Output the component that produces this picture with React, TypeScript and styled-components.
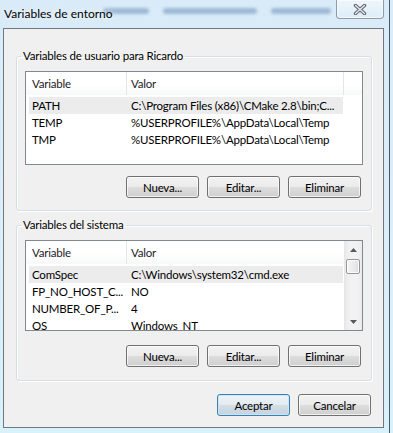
import React from "react";
import styled, { createGlobalStyle } from "styled-components";

const GlobalStyle = createGlobalStyle`
  html, body {
    margin: 0;
    padding: 0;
  }
  body {
    width: 393px;
    height: 433px;
    overflow: hidden;
    background: linear-gradient(180deg, #d9ebf8 0%, #dcedf9 45%, #d8f1fb 100%);
    font-family: "Lato", "Noto Sans", sans-serif;
    font-size: 11.5px;
    letter-spacing: -0.2px;
    color: #000;
  }
`;

const Frame = styled.div`
  position: relative;
  width: 390px;
  height: 433px;
  box-sizing: border-box;
  border-right: 1px solid rgba(40, 52, 64, 0.8);
  display: flex;
  flex-direction: column;
`;

// blurred tabs of the parent window showing through the glass
const Ghosts = styled.div`
  position: absolute;
  top: 8px;
  left: 103px;
  display: flex;
  gap: 14px;
  filter: blur(1.8px);
  pointer-events: none;
`;

const GhostBlob = styled.div<{ $w: number }>`
  width: ${(p) => p.$w}px;
  height: 6px;
  border-radius: 3px;
  background: rgba(70, 110, 160, 0.4);
`;

const TitleBar = styled.div`
  position: relative;
  height: 28px;
  display: flex;
  align-items: flex-start;
  justify-content: space-between;
  padding-left: 4px;
  padding-right: 5px;
  flex-shrink: 0;
`;

const Title = styled.div`
  line-height: 27px;
  font-size: 12px;
  letter-spacing: normal;
  color: #000;
  text-shadow: 0 0 6px rgba(255, 255, 255, 0.9);
`;

const CloseButton = styled.button`
  width: 48px;
  height: 19px;
  box-sizing: border-box;
  padding: 0;
  border: 1px solid rgba(80, 96, 112, 0.6);
  border-top: none;
  border-radius: 0 0 4px 4px;
  background: linear-gradient(180deg, rgba(255, 255, 255, 0.55), rgba(230, 240, 248, 0.35));
  box-shadow: inset 0 0 0 1px rgba(255, 255, 255, 0.6);
  display: flex;
  align-items: center;
  justify-content: center;
`;

const Client = styled.div`
  margin-left: 3px;
  width: 381px;
  height: 400px;
  box-sizing: border-box;
  border: 1px solid #70797f;
  background: #f0f0f0;
  padding: 19px 11px 0 12px;
  display: flex;
  flex-direction: column;
`;

const GroupBox = styled.fieldset<{ $top: number; $bottom: number }>`
  margin: ${(p) => p.$top}px 0 0 0;
  padding: 0 0 ${(p) => p.$bottom}px 0;
  border: 1px solid #d5dfe5;
  border-radius: 3px;
  min-width: 0;
  box-shadow: inset 1px 1px 0 #fff, 1px 1px 0 #fff;
`;

const Legend = styled.legend`
  margin-left: 4px;
  padding: 0 2px;
  line-height: 16px;
`;

const GroupBody = styled.div`
  padding: 0 8px;
`;

const ListView = styled.div<{ $height: number }>`
  margin-top: 7px;
  height: ${(p) => p.$height}px;
  box-sizing: border-box;
  border: 1px solid #828790;
  background: #fff;
  display: flex;
  overflow: hidden;
`;

const ListMain = styled.div`
  flex: 1;
  min-width: 0;
  display: flex;
  flex-direction: column;
`;

const HeaderRow = styled.div`
  display: flex;
  height: 23px;
  flex-shrink: 0;
  background: linear-gradient(180deg, #ffffff 0%, #ffffff 55%, #f7f8f9 100%);
`;

const HeaderCell = styled.div<{ $w?: number; $pad: number }>`
  ${(p) => (p.$w ? `width: ${p.$w}px;` : "flex: 1;")}
  box-sizing: border-box;
  padding-left: ${(p) => p.$pad}px;
  border-right: 1px solid #e5e5e5;
  line-height: 23px;
  color: #1e2328;
  white-space: nowrap;
  overflow: hidden;
  &:last-child {
    border-right: none;
  }
`;

const Rows = styled.div`
  padding: 2px 0 0 3px;
`;

const Row = styled.div<{ $selected?: boolean }>`
  display: flex;
  width: 314px;
  height: 17px;
  line-height: 17px;
  background: ${(p) => (p.$selected ? "#ececec" : "transparent")};
  white-space: nowrap;
`;

const Cell = styled.div<{ $w?: number; $pad: number }>`
  ${(p) => (p.$w ? `width: ${p.$w}px; flex-shrink: 0;` : "flex: 1; min-width: 0;")}
  box-sizing: border-box;
  padding-left: ${(p) => p.$pad}px;
  overflow: hidden;
`;

const ScrollBar = styled.div`
  width: 18px;
  flex-shrink: 0;
  display: flex;
  flex-direction: column;
  box-sizing: border-box;
  border-left: 1px solid #e6e6e6;
  background: linear-gradient(90deg, #e9e9e9 0%, #f2f2f2 30%, #f2f2f2 70%, #ebebeb 100%);
`;

const ArrowBox = styled.div`
  height: 17px;
  display: flex;
  align-items: center;
  justify-content: center;
`;

const Thumb = styled.div`
  margin: 1px 0 0 1px;
  width: 14px;
  height: 15px;
  box-sizing: border-box;
  border: 1px solid #979797;
  border-radius: 2px;
  background: linear-gradient(90deg, #f4f4f4 0%, #ececec 50%, #dedede 100%);
  box-shadow: inset 0 0 0 1px rgba(255, 255, 255, 0.8);
`;

const Spacer = styled.div`
  flex: 1;
`;

const ButtonRow = styled.div<{ $top: number; $right: number }>`
  margin-top: ${(p) => p.$top}px;
  padding-right: ${(p) => p.$right}px;
  display: flex;
  justify-content: flex-end;
  gap: 8px;
`;

const Button = styled.button<{ $default?: boolean }>`
  width: 73px;
  height: 22px;
  box-sizing: border-box;
  padding: 0;
  font-family: inherit;
  font-size: 11.5px;
  letter-spacing: -0.2px;
  color: #000;
  border: 1px solid ${(p) => (p.$default ? "#3c7fb1" : "#707070")};
  border-radius: 3px;
  background: ${(p) =>
    p.$default
      ? "linear-gradient(180deg, #eef4f8 0%, #e3ebf1 50%, #d3dee6 51%, #c6d3dd 100%)"
      : "linear-gradient(180deg, #f2f2f2 0%, #ebebeb 50%, #dddddd 51%, #cfcfcf 100%)"};
  box-shadow: inset 0 0 0 1px
    ${(p) => (p.$default ? "rgba(200, 232, 248, 0.9)" : "rgba(255, 255, 255, 0.7)")};
`;

type Entry = { name: string; value: string; selected?: boolean };

const userVars: Entry[] = [
  { name: "PATH", value: "C:\\Program Files (x86)\\CMake 2.8\\bin;C...", selected: true },
  { name: "TEMP", value: "%USERPROFILE%\\AppData\\Local\\Temp" },
  { name: "TMP", value: "%USERPROFILE%\\AppData\\Local\\Temp" },
];

const systemVars: Entry[] = [
  { name: "ComSpec", value: "C:\\Windows\\system32\\cmd.exe", selected: true },
  { name: "FP_NO_HOST_C...", value: "NO" },
  { name: "NUMBER_OF_P...", value: "4" },
  { name: "OS", value: "Windows_NT" },
];

const CloseIcon = () => (
  <svg width="14" height="11" viewBox="0 0 14 11">
    <path d="M2.5 1.5 L11.5 9.5 M11.5 1.5 L2.5 9.5" stroke="#5f6368" strokeWidth="3.4" strokeLinecap="round" />
    <path d="M2.5 1.5 L11.5 9.5 M11.5 1.5 L2.5 9.5" stroke="#eef0f2" strokeWidth="1.3" strokeLinecap="round" />
  </svg>
);

const Arrow = ({ up }: { up?: boolean }) => (
  <svg width="7" height="4" viewBox="0 0 7 4">
    <path d={up ? "M0 4 L3.5 0 L7 4 Z" : "M0 0 L7 0 L3.5 4 Z"} fill="#5a5a5a" />
  </svg>
);

const VarTable = ({
  entries,
  height,
  scroll,
}: {
  entries: Entry[];
  height: number;
  scroll?: boolean;
}) => (
  <ListView $height={height}>
    <ListMain>
      <HeaderRow>
        <HeaderCell $w={101} $pad={6}>
          Variable
        </HeaderCell>
        <HeaderCell $w={scroll ? undefined : 217} $pad={4}>
          Valor
        </HeaderCell>
        {!scroll && <HeaderCell $pad={0} />}
      </HeaderRow>
      <Rows>
        {entries.map((e) => (
          <Row key={e.name} $selected={e.selected}>
            <Cell $w={97} $pad={3}>
              {e.name}
            </Cell>
            <Cell $pad={5}>{e.value}</Cell>
          </Row>
        ))}
      </Rows>
    </ListMain>
    {scroll && (
      <ScrollBar>
        <ArrowBox>
          <Arrow up />
        </ArrowBox>
        <Thumb />
        <Spacer />
        <ArrowBox>
          <Arrow />
        </ArrowBox>
      </ScrollBar>
    )}
  </ListView>
);

export default function App() {
  return (
    <>
      <GlobalStyle />
      <Frame>
        <Ghosts>
          <GhostBlob $w={46} />
          <GhostBlob $w={94} />
          <GhostBlob $w={60} />
        </Ghosts>
        <TitleBar>
          <Title>Variables de entorno</Title>
          <CloseButton aria-label="Cerrar">
            <CloseIcon />
          </CloseButton>
        </TitleBar>
        <Client>
          <GroupBox $top={0} $bottom={12}>
            <Legend>Variables de usuario para Ricardo</Legend>
            <GroupBody>
              <VarTable entries={userVars} height={94} />
              <ButtonRow $top={11} $right={2}>
                <Button>Nueva...</Button>
                <Button>Editar...</Button>
                <Button>Eliminar</Button>
              </ButtonRow>
            </GroupBody>
          </GroupBox>
          <GroupBox $top={6} $bottom={13}>
            <Legend>Variables del sistema</Legend>
            <GroupBody>
              <VarTable entries={systemVars} height={91} scroll />
              <ButtonRow $top={14} $right={2}>
                <Button>Nueva...</Button>
                <Button>Editar...</Button>
                <Button>Eliminar</Button>
              </ButtonRow>
            </GroupBody>
          </GroupBox>
          <ButtonRow $top={13} $right={1}>
            <Button $default>Aceptar</Button>
            <Button>Cancelar</Button>
          </ButtonRow>
        </Client>
      </Frame>
    </>
  );
}
